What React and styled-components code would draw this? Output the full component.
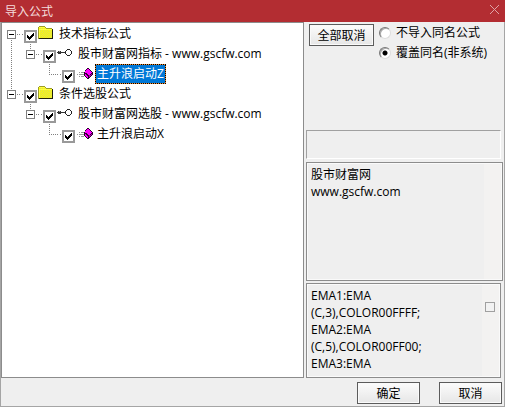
import React, { useState } from 'react';
import styled, { createGlobalStyle, css } from 'styled-components';

const GlobalStyle = createGlobalStyle`
  * { box-sizing: border-box; }
  body {
    margin: 0;
    background: #efefef;
    color: #000;
    font: 12px/17px 'Open Sans', 'Noto Sans CJK SC', sans-serif;
  }
  button, input, textarea { font: inherit; color: inherit; margin: 0; }
`;

// Window
const Dialog = styled.form`
  display: flex;
  flex-direction: column;
  min-height: 100vh;
`;

const TitleBar = styled.header`
  display: flex;
  align-items: center;
  justify-content: space-between;
  height: 22px;
  padding: 0 5px;
  background: #b32d32;
  color: #f3dcdc;
`;

const Title = styled.h1`
  margin: 0;
  font-size: 12px;
  font-weight: normal;
`;

const CloseButton = styled.button`
  display: flex;
  padding: 0 0 3px;
  border: 0;
  background: none;
  color: #dfa3a5;
`;

const Frame = styled.div`
  display: flex;
  flex: 1;
  flex-direction: column;
  border: solid #a5a5a5;
  border-width: 0 1px 1px;
`;

const Content = styled.main`
  display: grid;
  flex: 1;
  grid-template-columns: 1fr 197px;
  column-gap: 2px;
  padding-right: 1px;
`;

const Footer = styled.footer`
  display: flex;
  justify-content: flex-end;
  gap: 19px;
  padding: 4px 2px 2px;
`;

const Button = styled.button`
  width: ${({ $wide }) => ($wide ? 65 : 63)}px;
  height: 22px;
  padding: 0;
  border: 1px solid #5c5c5c;
  background: linear-gradient(#fcfcfc, #e6e6e6);
  box-shadow: inset 0 0 0 1px #fafafa;
  line-height: 17px;
`;

// Tree
const Tree = styled.div`
  padding: 1px 0 0;
  border: 1px solid #8c8c8c;
  background: #fff;
`;

const TreeRow = styled.div`
  display: flex;
  height: 20px;
`;

const dotsDown = 'repeating-linear-gradient(#808080 0 1px, transparent 1px 2px)';
const dotsAcross = 'repeating-linear-gradient(90deg, #808080 0 1px, transparent 1px 2px)';

const guides = {
  none: 'none',
  first: `${dotsDown} 9px 10px / 1px 10px no-repeat, ${dotsAcross} 9px 10px / 10px 1px no-repeat`,
  line: `${dotsDown} 9px 0 / 1px 20px no-repeat`,
  last: `${dotsDown} 9px 0 / 1px 10px no-repeat, ${dotsAcross} 9px 10px / 10px 1px no-repeat`,
};

const Guide = styled.span`
  display: flex;
  justify-content: center;
  align-items: center;
  width: 19px;
  padding-top: 1px;
  background: ${({ $kind }) => guides[$kind]};
`;

const Expander = styled.button`
  width: 9px;
  height: 9px;
  padding: 0;
  border: 1px solid #808080;
  background: linear-gradient(#000, #000) center / 5px 1px no-repeat #fff;
`;

const tick = `url("data:image/svg+xml,%3Csvg xmlns='http://www.w3.org/2000/svg' width='7' height='7' shape-rendering='crispEdges'%3E%3Cpath d='M0 2h1v1h1v1h1V3h1V2h1V1h1V0h1v3H6v1H5v1H4v1H3v1H2V6H1V5H0z'/%3E%3C/svg%3E")`;

const Stub = styled.span`
  width: 3px;
  background: ${dotsAcross} 1px 10px / 2px 1px no-repeat;
`;

const Check = styled.input.attrs({ type: 'checkbox' })`
  appearance: none;
  width: 13px;
  height: 13px;
  margin-top: 6px;
  border: 2px solid #999;
  background: #fff;
  &:checked { background: ${tick} center no-repeat #fff; }
`;

const IconCell = styled.span`
  width: 20px;
  padding: 2px 0 0 1px;
  svg { display: block; }
`;

const TreeLabel = styled.label`
  height: 20px;
  padding: 0 1px;
  border: 1px solid transparent;
  line-height: 18px;
  white-space: nowrap;
  ${({ $selected }) => $selected && css`
    border: 1px dotted #000;
    background: linear-gradient(#0078d7, #0078d7) padding-box, #f08a2c border-box;
    color: #fff;
  `}
`;

// Side column
const Side = styled.section`
  display: flex;
  flex-direction: column;
`;

const Options = styled.div`
  display: flex;
  flex: 1;
  align-items: flex-start;
  gap: 5px;
  padding: 2px 0 0 3px;
`;

const RadioGroup = styled.div`
  margin-top: -1px;
`;

const RadioLabel = styled.label`
  display: flex;
  align-items: center;
  gap: 5px;
  height: 20px;
  line-height: 20px;
  white-space: nowrap;
`;

const Radio = styled.input.attrs({ type: 'radio' })`
  appearance: none;
  width: 12px;
  height: 12px;
  border: 1px solid;
  border-color: #777 #ddd #ddd #777;
  border-radius: 50%;
  background: #fff;
  box-shadow: inset 1px 1px 0 #aaa;
  &:checked { background: radial-gradient(circle, #000 0 2px, #fff 3px); }
`;

const Status = styled.div`
  height: 29px;
  margin: 0 2px 3px 0;
  border: 1px solid;
  border-color: #a0a0a0 #fff #fff #a0a0a0;
`;

const MemoBox = styled.div`
  display: flex;
  height: ${({ $height }) => $height}px;
  border: 1px solid #8c8c8c;
  padding: 1px;
  background: #efefef;
  box-shadow: inset 0 0 0 1px #fafafa;
  & + & { margin: 2px 2px 0 0; }
`;

const Memo = styled.textarea`
  flex: 1;
  min-width: 0;
  padding: 2px 0 0 3px;
  border: 0;
  outline: 0;
  background: transparent;
  overflow: hidden;
  resize: none;
  line-height: 17px;
`;

const Track = styled.div`
  width: 17px;
  padding: 17px 0 0 3px;
  background: #f3f2f1;
`;

const Thumb = styled.div`
  width: 10px;
  height: 10px;
  border: 1px solid #a0a0a0;
  background: #f2f2f2;
`;

// Icons
const FolderIcon = () => (
  <svg width="16" height="14" shapeRendering="crispEdges" aria-hidden="true">
    <defs>
      <pattern id="dither" width="2" height="2" patternUnits="userSpaceOnUse">
        <path d="M0 0h2v2H0z" fill="#ff0" />
        <path d="M0 0h1v1H0zM1 1h1v1H1z" fill="#d8d860" />
      </pattern>
    </defs>
    <path d="M1 0h6v1h1v1h6v11H0V1h1z" fill="#9c9c28" />
    <path d="M1 1h6v1h1v1h6v9H1z" fill="url(#dither)" />
    <path d="M1 1h6v1H1zM1 3h13v1H1zM1 3h1v9H1z" fill="#ffff40" />
    <path d="M14 3h1v10H1v-1h13z" fill="#20200c" />
  </svg>
);

const KeyIcon = () => (
  <svg width="16" height="16" shapeRendering="crispEdges" aria-hidden="true">
    <path d="M1 5h3v1h5v1H4v1H1V7H0V6h1z" fill="#333" />
    <path d="M2 5h1v1H2z" fill="#999" />
    <path
      d="M10 3h3v1h-3zM9 4h1v1H9zM13 4h1v1h-1zM8 5h1v3H8zM14 5h1v3h-1zM9 8h1v1H9zM13 8h1v1h-1zM10 9h3v1h-3z"
      fill="#222"
    />
  </svg>
);

const GemIcon = () => (
  <svg width="17" height="16" shapeRendering="crispEdges" aria-hidden="true">
    <path d="M3 6h1v1H3zM5 6h3v1H5zM1 8h1v1H1zM3 8h5v1H3zM3 10h1v1H3zM5 10h3v1H5z" fill="#999" />
    <path d="M11 2h2v1h1v1h1v1h1v1h1v3h-1v1h-1v1h-1v1h-1v1h-2v-1h-1v-1H9v-1H8V6h1V4h1V3h1z" fill="#300030" />
    <path d="M11 3h2v1h1v1h1v1h1v1h-1v1h-1v1h-2V8h-1V7H9V5h1V4h1z" fill="#f0f" />
    <path d="M9 8h1v1h1v1h1v2h-1v-1h-1v-1H9z" fill="#f0f" />
    <path d="M15 8h1v1h-1v1h-1v1h-1V9h2z" fill="#b000b0" />
  </svg>
);

const CloseIcon = () => (
  <svg width="11" height="11" stroke="currentColor" aria-hidden="true">
    <path d="M1 1l9 9M10 1l-9 9" />
  </svg>
);

const rows = [
  { text: '技术指标公式', guide: ['first'], icon: FolderIcon, open: true },
  { text: '股市财富网指标 - www.gscfw.com', guide: ['line', 'last'], icon: KeyIcon, open: true },
  { text: '主升浪启动Z', guide: ['line', 'none', 'last'], icon: GemIcon },
  { text: '条件选股公式', guide: ['last'], icon: FolderIcon, open: true },
  { text: '股市财富网选股 - www.gscfw.com', guide: ['none', 'last'], icon: KeyIcon, open: true },
  { text: '主升浪启动X', guide: ['none', 'none', 'last'], icon: GemIcon },
];

const source = `EMA1:EMA
(C,3),COLOR00FFFF;
EMA2:EMA
(C,5),COLOR00FF00;
EMA3:EMA`;

const App = () => {
  const [checked, setChecked] = useState(rows.map(() => true));
  const [selected, setSelected] = useState(2);

  const toggle = (index) => {
    setChecked(checked.map((val, i) => (i === index ? !val : val)));
    setSelected(index);
  };

  return (
    <Dialog onSubmit={(e) => e.preventDefault()}>
      <GlobalStyle />
      <TitleBar>
        <Title>导入公式</Title>
        <CloseButton type="button" aria-label="关闭"><CloseIcon /></CloseButton>
      </TitleBar>

      <Frame>
        <Content>
          <Tree>
            {rows.map(({ text, guide, icon: Icon, open }, index) => (
              <TreeRow key={text}>
                {guide.map((kind, level) => (
                  <Guide key={level} $kind={kind}>
                    {open && level === guide.length - 1 && <Expander type="button" aria-label="折叠" />}
                  </Guide>
                ))}
                <Stub />
                <Check id={`formula-${index}`} checked={checked[index]} onChange={() => toggle(index)} />
                <IconCell><Icon /></IconCell>
                <TreeLabel htmlFor={`formula-${index}`} $selected={selected === index}>{text}</TreeLabel>
              </TreeRow>
            ))}
          </Tree>

          <Side>
            <Options>
              <Button type="button" $wide>全部取消</Button>
              <RadioGroup>
                <RadioLabel><Radio name="mode" value="skip" />不导入同名公式</RadioLabel>
                <RadioLabel><Radio name="mode" value="replace" defaultChecked />覆盖同名(非系统)</RadioLabel>
              </RadioGroup>
            </Options>
            <Status />
            <MemoBox $height={119}>
              <Memo readOnly aria-label="说明" value={'股市财富网\nwww.gscfw.com'} />
              <Track />
            </MemoBox>
            <MemoBox $height={95}>
              <Memo readOnly aria-label="公式" value={source} />
              <Track><Thumb /></Track>
            </MemoBox>
          </Side>
        </Content>

        <Footer>
          <Button type="submit">确定</Button>
          <Button type="button">取消</Button>
        </Footer>
      </Frame>
    </Dialog>
  );
};

export default App;
